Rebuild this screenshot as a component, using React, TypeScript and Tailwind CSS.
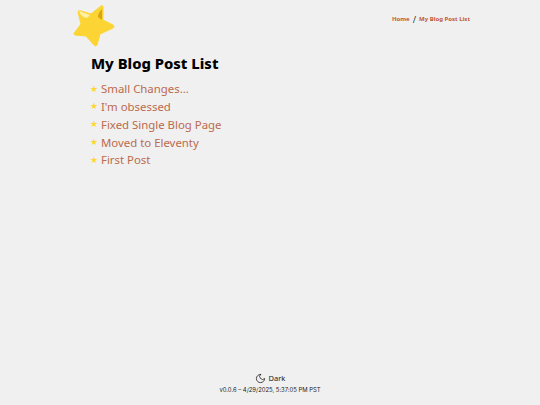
const posts = [
  "Small Changes...",
  "I'm obsessed",
  "Fixed Single Blog Page",
  "Moved to Eleventy",
  "First Post",
];

function StarLogo() {
  return (
    <svg viewBox="0 0 46 46" className="h-[46px] w-[46px] shrink-0">
      <path
        d="M31 5 L31 18 L41 23 Q43 25 41 26 L28 32 L25 43 Q24 45 22 43 L14 34 L3 33 Q1 32 3 30 L9 22 L6 10 Q6 8 9 9 L19 12 L29 4 Q31 3 31 5 Z"
        fill="#fcd535"
        stroke="#fcd535"
        strokeLinejoin="round"
      />
      <path d="M7 9 L18 13 L15 16 Q9 15 7 9 Z" fill="#fff0a8" />
      <path d="M30 7 L30 18 L26 15 Q26 11 30 7 Z" fill="#d9a514" />
    </svg>
  );
}

function MoonIcon() {
  return (
    <svg viewBox="0 0 24 24" className="h-[11px] w-[11px]" fill="none" stroke="#111" strokeWidth="1.6" strokeLinecap="round" strokeLinejoin="round">
      <path d="M12 3a6 6 0 0 0 9 9 9 9 0 1 1-9-9Z" />
    </svg>
  );
}

export default function App() {
  return (
    <div className="flex h-[405px] w-[540px] flex-col overflow-hidden bg-[#f0f0f0] font-['Noto_Sans',sans-serif]">
      <header className="ml-[72px] mr-[70px] flex items-start justify-between pt-[2px]">
        <StarLogo />
        <nav className="flex items-center gap-[3px] pt-[11px] text-[6px] font-bold text-[#c0583a]">
          <a>Home</a>
          <span className="text-[9px] font-normal text-[#333]">/</span>
          <a>My Blog Post List</a>
        </nav>
      </header>
      <main className="ml-[91px] flex-1">
        <h1 className="mt-[3px] text-[14.8px] leading-[24px] font-extrabold text-black">My Blog Post List</h1>
        <ul className="mt-[5px] flex flex-col">
          {posts.map((post) => (
            <li key={post} className="flex h-[17.75px] items-center text-[11.4px] text-[#bb6a4c]">
              <span className="-ml-[1px] w-[11px] text-[8.5px] text-[#fdd835]">★</span>
              <a>{post}</a>
            </li>
          ))}
        </ul>
      </main>
      <footer className="flex flex-col items-center pb-[10px] text-[#222]">
        <button className="flex items-center gap-[3px] text-[7.5px] font-normal">
          <MoonIcon />
          Dark
        </button>
        <p className="mt-[2px] font-['Inter',sans-serif] text-[5.9px]">v0.0.6 – 4/29/2025, 5:37:05 PM PST</p>
      </footer>
    </div>
  );
}
